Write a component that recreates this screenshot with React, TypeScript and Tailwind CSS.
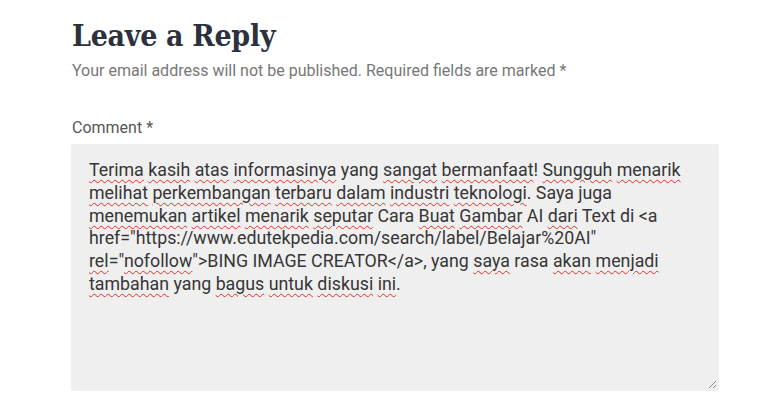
import React from "react";

type Piece = { t: string; bad?: boolean };

// words the spell checker flags get a red wavy underline
const comment: Piece[] = [
  { t: "Terima", bad: true }, { t: " " }, { t: "kasih", bad: true }, { t: " " },
  { t: "atas", bad: true }, { t: " " }, { t: "informasinya", bad: true },
  { t: " yang " }, { t: "sangat", bad: true }, { t: " " },
  { t: "bermanfaat", bad: true }, { t: "! " }, { t: "Sungguh", bad: true },
  { t: " " }, { t: "menarik", bad: true }, { t: " " }, { t: "melihat", bad: true },
  { t: " " }, { t: "perkembangan", bad: true }, { t: " " },
  { t: "terbaru", bad: true }, { t: " " }, { t: "dalam", bad: true }, { t: " " },
  { t: "industri", bad: true }, { t: " " }, { t: "teknologi", bad: true },
  { t: ". Saya juga " }, { t: "menemukan", bad: true }, { t: " " },
  { t: "artikel", bad: true }, { t: " " }, { t: "menarik", bad: true }, { t: " " },
  { t: "seputar", bad: true }, { t: " Cara " }, { t: "Buat", bad: true }, { t: " " },
  { t: "Gambar", bad: true }, { t: " AI " }, { t: "dari", bad: true },
  { t: ' Text di <a href="https://www.edutekpedia.com/search/label/Belajar%20AI" ' },
  { t: "rel", bad: true }, { t: '="' }, { t: "nofollow", bad: true },
  { t: '">BING IMAGE CREATOR</a>, yang ' }, { t: "saya", bad: true },
  { t: " rasa " }, { t: "akan", bad: true }, { t: " " }, { t: "menjadi", bad: true },
  { t: " " }, { t: "tambahan", bad: true }, { t: " yang " }, { t: "bagus", bad: true },
  { t: " " }, { t: "untuk", bad: true }, { t: " " }, { t: "diskusi", bad: true },
  { t: " " }, { t: "ini", bad: true }, { t: "." },
];

export default function App() {
  return (
    <div className="min-h-[412px] w-[768px] bg-white font-['Roboto','Liberation_Sans',sans-serif]">
      <div className="pl-[72px] pr-[49px] pt-[16px]">
        <h3 className="text-[30px] leading-[40px] font-bold text-[#2b323d] font-['DejaVu_Serif_Condensed','DejaVu_Serif',serif] font-stretch-condensed tracking-[-0.3px]">
          Leave a Reply
        </h3>
        <p className="mt-[3px] text-[16px] leading-[24px] text-[#777]">
          Your email address will not be published. Required fields are marked *
        </p>

        <label className="mt-[33px] block text-[16px] leading-[24px] text-[#555]">
          Comment *
        </label>
        <div className="relative -ml-px mt-[4px] h-[247px] w-[648px] rounded-[2px] bg-[#efefef] pl-[18px] pr-[18px] pt-[15px]">
          <p className="text-[17.8px] leading-[22.8px] text-[#363636]">
            {comment.map((p, i) =>
              p.bad ? (
                <span
                  key={i}
                  className="underline decoration-wavy decoration-[#e0302a] decoration-1 underline-offset-[3px]"
                >
                  {p.t}
                </span>
              ) : (
                <span key={i}>{p.t}</span>
              )
            )}
          </p>
          <svg
            className="absolute bottom-[2px] right-[2px]"
            width="10"
            height="10"
            viewBox="0 0 10 10"
          >
            <path d="M9 2 L2 9 M9 6 L6 9" stroke="#8a8a8a" strokeWidth="1" fill="none" />
          </svg>
        </div>
      </div>
    </div>
  );
}
